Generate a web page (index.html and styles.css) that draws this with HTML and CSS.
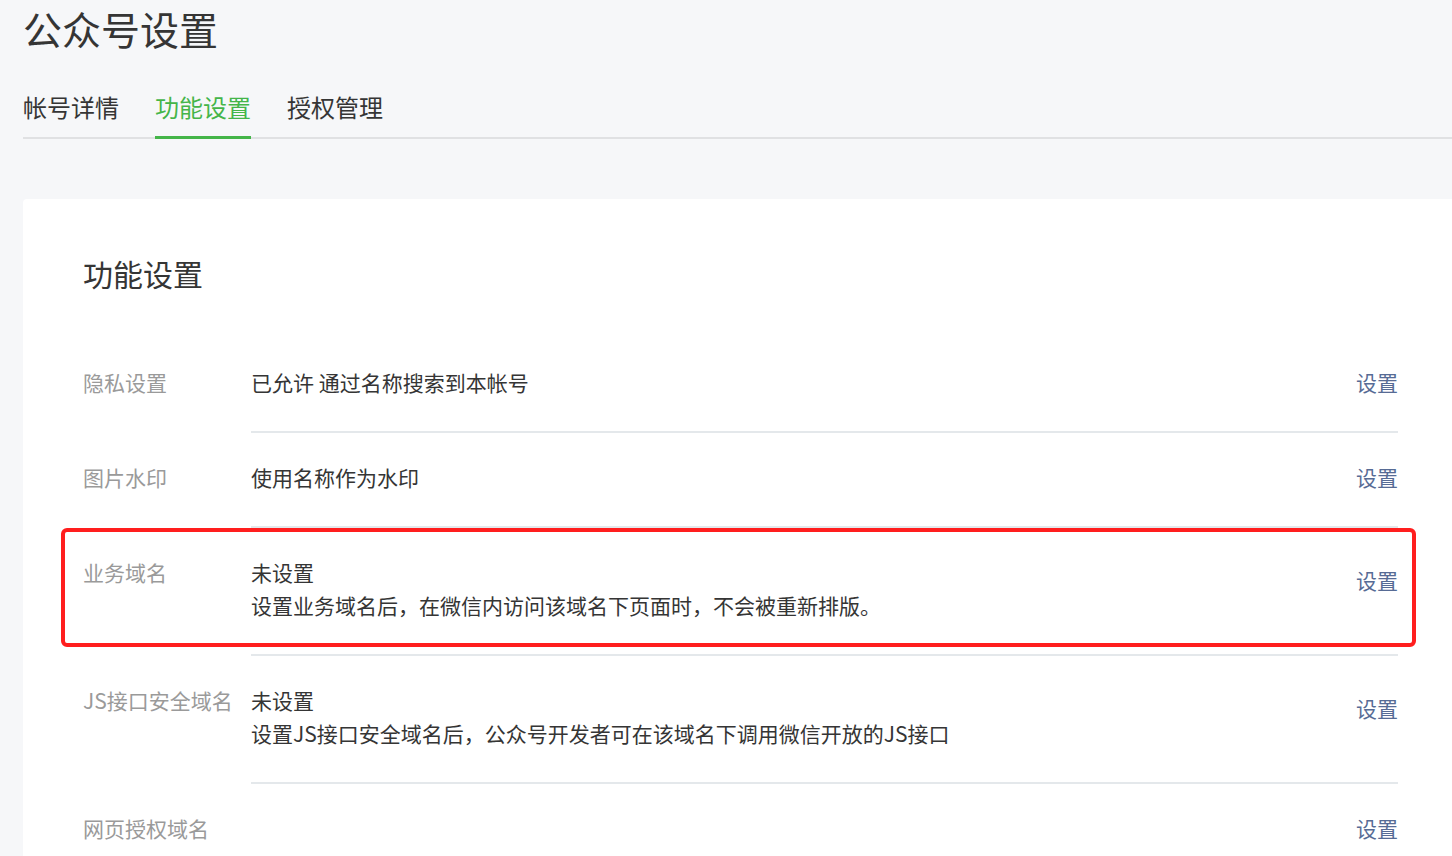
FILE: index.html
```html
<!DOCTYPE html>
<html>
<head>
    <meta http-equiv="Content-Type" content="text/html; charset=utf-8" />
    <title>公众号设置</title>
    <link rel="stylesheet" href="styles.css">
</head>
<body>
<div class="page">
    <h1 class="page_title">公众号设置</h1>

    <ul class="tab_nav">
        <li class="tab_item">帐号详情</li>
        <li class="tab_item selected">功能设置</li>
        <li class="tab_item">授权管理</li>
    </ul>

    <div class="card">
        <h2 class="card_title">功能设置</h2>

        <div class="setting_row">
            <div class="setting_label">隐私设置</div>
            <div class="setting_body">
                <div class="setting_value">已允许 通过名称搜索到本帐号</div>
                <a class="setting_opr" href="#">设置</a>
            </div>
        </div>

        <div class="setting_row">
            <div class="setting_label">图片水印</div>
            <div class="setting_body">
                <div class="setting_value">使用名称作为水印</div>
                <a class="setting_opr" href="#">设置</a>
            </div>
        </div>

        <div class="setting_row tall marked">
            <div class="setting_label">业务域名</div>
            <div class="setting_body">
                <div class="setting_value">
                    <p>未设置</p>
                    <p>设置业务域名后，在微信内访问该域名下页面时，不会被重新排版。</p>
                </div>
                <a class="setting_opr" href="#">设置</a>
            </div>
        </div>

        <div class="setting_row tall">
            <div class="setting_label">JS接口安全域名</div>
            <div class="setting_body">
                <div class="setting_value">
                    <p>未设置</p>
                    <p>设置JS接口安全域名后，公众号开发者可在该域名下调用微信开放的JS接口</p>
                </div>
                <a class="setting_opr" href="#">设置</a>
            </div>
        </div>

        <div class="setting_row">
            <div class="setting_label">网页授权域名</div>
            <div class="setting_body">
                <div class="setting_value"></div>
                <a class="setting_opr" href="#">设置</a>
            </div>
        </div>
    </div>
</div>
</body>
</html>
```

FILE: styles.css
```css
html {
    background: #F6F7F9;
    overflow: hidden;
}

body {
    margin: 0;
    color: #353535;
    font-family: "Microsoft YaHei", "Noto Sans CJK SC", sans-serif;
}

.page {
    width: 1435px;
    margin-left: 23px;
}

.page_title {
    margin: 0;
    font-size: 39px;
    font-weight: normal;
    line-height: 56px;
}

.tab_nav {
    display: flex;
    gap: 36px;
    margin: 33px 0 0;
    padding: 0;
    list-style: none;
    border-bottom: 2px solid #E0E1E3;
}

.tab_item {
    font-size: 24px;
    line-height: 36px;
    padding-bottom: 11px;
    margin-bottom: -2px;
    border-bottom: 3px solid transparent;
}

.tab_item.selected {
    color: #44B549;
    border-bottom-color: #44B549;
}

.card {
    margin-top: 60px;
    padding: 53px 60px 40px;
    background: #FFF;
    border-radius: 4px;
    min-height: 700px;
}

.card_title {
    margin: 0 0 44px;
    font-size: 30px;
    font-weight: normal;
    line-height: 42px;
}

.setting_row {
    display: flex;
    position: relative;
    font-size: 21px;
    line-height: 33px;
}

.setting_label {
    width: 168px;
    flex-shrink: 0;
    padding-top: 28px;
    color: #9A9A9A;
    white-space: nowrap;
}

.setting_body {
    flex: 1;
    display: flex;
    align-items: flex-start;
    padding: 28px 0 32px;
    border-bottom: 2px solid #E4E8EB;
}

.setting_value {
    flex: 1;
    min-height: 33px;
}

.setting_value p {
    margin: 0;
}

.setting_opr {
    color: #576B95;
    text-decoration: none;
}

.tall .setting_opr {
    padding-top: 8px;
}

/* red annotation frame */
.marked::after {
    content: "";
    position: absolute;
    top: 0;
    bottom: 9px;
    left: -22px;
    right: -18px;
    border: 4px solid #FF1E1E;
    border-radius: 6px;
}
```
